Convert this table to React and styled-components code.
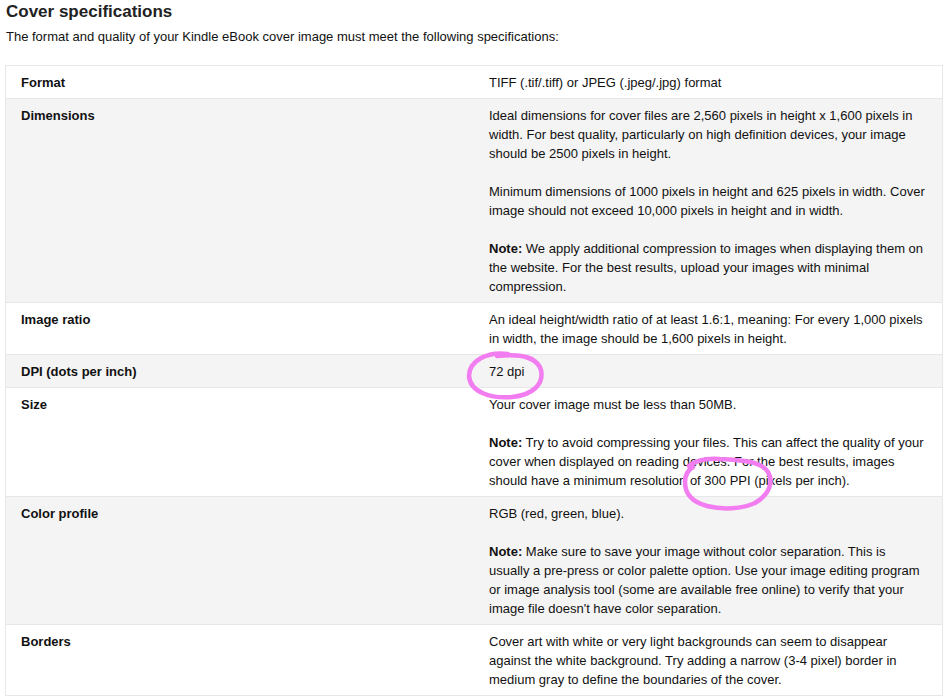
import React from "react";
import styled, { createGlobalStyle } from "styled-components";

const GlobalStyle = createGlobalStyle`
  html, body { margin: 0; padding: 0; background: #fff; }
  body { font-family: "Liberation Sans", Arial, sans-serif; color: #111; }
`;

const Page = styled.div`
  padding: 0 6px 0 5px;
  width: 938px;
`;

const Title = styled.h2`
  margin: 0 0 0 1px;
  font-size: 17px;
  line-height: 24px;
  font-weight: bold;
  color: #222;
`;

const Intro = styled.p`
  margin: 3px 0 19px 1px;
  font-size: 13px;
  line-height: 19px;
`;

const Table = styled.table`
  width: 938px;
  border-collapse: collapse;
  border: 1px solid #e7e7e7;
  font-size: 13px;
  line-height: 19px;
  table-layout: fixed;
`;

const Row = styled.tr`
  background: ${(p) => (p.$shaded ? "#f4f4f4" : "#ffffff")};
  border-top: 1px solid #e7e7e7;
`;

const Cell = styled.td`
  width: 50%;
  vertical-align: top;
  padding: 7px 15px 6px;
  font-weight: ${(p) => (p.$head ? "bold" : "normal")};
  color: #111;
`;

const Para = styled.p`
  margin: 0 0 19px;
  &:last-child { margin-bottom: 0; }
`;

const Highlight = styled.span`
  position: relative;
`;

const Ring = styled.svg`
  position: absolute;
  left: ${(p) => p.$x}px;
  top: ${(p) => p.$y}px;
  overflow: visible;
  pointer-events: none;
`;

const Circle1 = () => (
  <Ring $x={-23} $y={-13} width="79" height="49" viewBox="0 0 79 49">
    <path
      d="M42 3 C21 0, 3 10, 3 25 C4 41, 25 48, 46 46 C67 44, 78 33, 75 19 C72 8, 58 2, 31 5"
      fill="none"
      stroke="#f27df0"
      strokeWidth="4.5"
      strokeLinecap="round"
    />
  </Ring>
);

const Circle2 = () => (
  <Ring $x={-20} $y={-16} width="90" height="53" viewBox="0 0 90 53">
    <path
      d="M5 9 C12 3, 22 1, 36 2 C57 3, 77 4, 84 15 C90 25, 85 38, 71 46 C58 52, 39 53, 23 49 C8 45, 1 37, 1 25 C1 18, 4 13, 9 10"
      fill="none"
      stroke="#f27df0"
      strokeWidth="4.5"
      strokeLinecap="round"
    />
  </Ring>
);

const rows = [
  { label: "Format", body: [<>TIFF (.tif/.tiff) or JPEG (.jpeg/.jpg) format</>] },
  {
    label: "Dimensions",
    body: [
      <>Ideal dimensions for cover files are 2,560 pixels in height x 1,600 pixels in width. For best quality, particularly on high definition devices, your image should be 2500 pixels in height.</>,
      <>Minimum dimensions of 1000 pixels in height and 625 pixels in width. Cover image should not exceed 10,000 pixels in height and in width.</>,
      <><b>Note:</b> We apply additional compression to images when displaying them on the website. For the best results, upload your images with minimal compression.</>,
    ],
  },
  {
    label: "Image ratio",
    body: [<>An ideal height/width ratio of at least 1.6:1, meaning: For every 1,000 pixels in width, the image should be 1,600 pixels in height.</>],
  },
  {
    label: "DPI (dots per inch)",
    body: [<><Highlight>72 dpi<Circle1 /></Highlight></>],
  },
  {
    label: "Size",
    body: [
      <>Your cover image must be less than 50MB.</>,
      <><b>Note:</b> Try to avoid compressing your files. This can affect the quality of your cover when displayed on reading devices. For the best results, images should have a minimum resolution of <Highlight>300 PPI<Circle2 /></Highlight> (pixels per inch).</>,
    ],
  },
  {
    label: "Color profile",
    body: [
      <>RGB (red, green, blue).</>,
      <><b>Note:</b> Make sure to save your image without color separation. This is usually a pre-press or color palette option. Use your image editing program or image analysis tool (some are available free online) to verify that your image file doesn't have color separation.</>,
    ],
  },
  {
    label: "Borders",
    body: [<>Cover art with white or very light backgrounds can seem to disappear against the white background. Try adding a narrow (3-4 pixel) border in medium gray to define the boundaries of the cover.</>],
  },
];

export default function App() {
  return (
    <>
      <GlobalStyle />
      <Page>
        <Title>Cover specifications</Title>
        <Intro>The format and quality of your Kindle eBook cover image must meet the following specifications:</Intro>
        <Table>
          <tbody>
            {rows.map((r, i) => (
              <Row key={r.label} $shaded={i % 2 === 1}>
                <Cell $head>{r.label}</Cell>
                <Cell>
                  {r.body.map((b, j) => (
                    <Para key={j}>{b}</Para>
                  ))}
                </Cell>
              </Row>
            ))}
          </tbody>
        </Table>
      </Page>
    </>
  );
}
